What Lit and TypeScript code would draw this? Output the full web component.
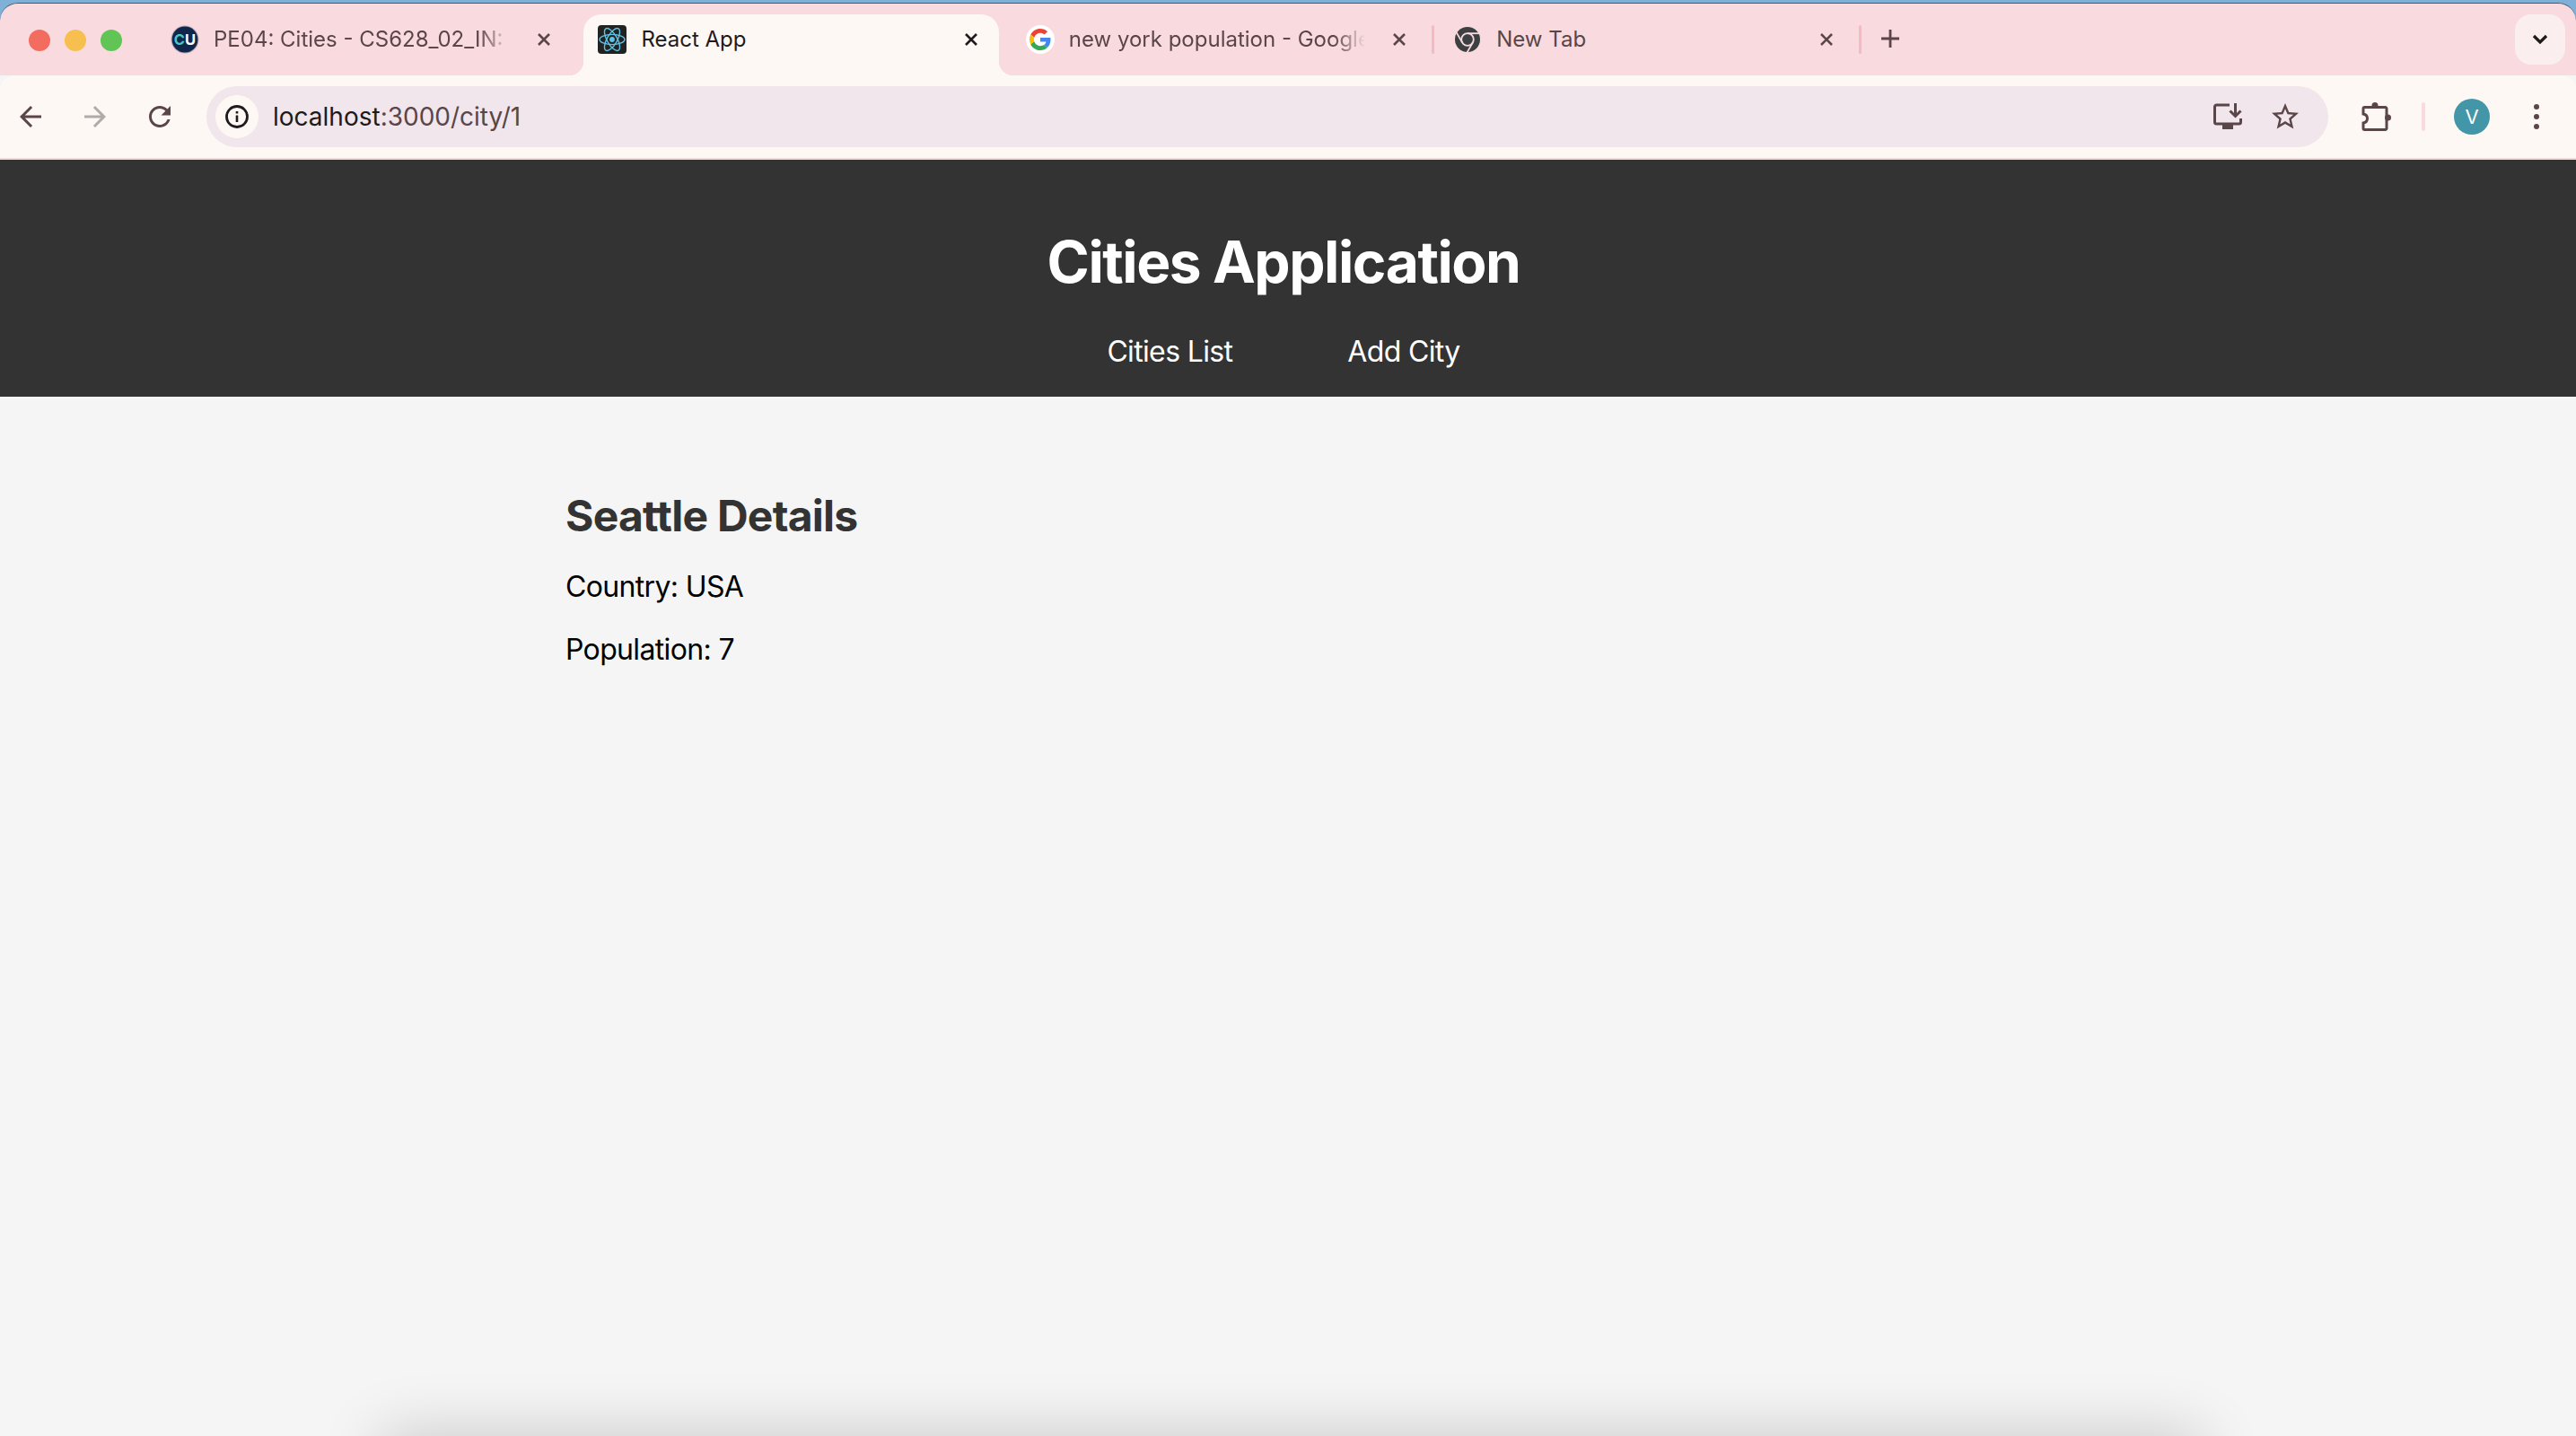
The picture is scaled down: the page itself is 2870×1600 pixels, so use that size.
import { LitElement, html, css } from "lit";
import { customElement } from "lit/decorators.js";

const cuIcon = html`<svg class="favicon" viewBox="0 0 32 32">
  <circle cx="16" cy="16" r="15.5" fill="#b9a9b4"></circle>
  <circle cx="16" cy="16" r="14.4" fill="#10264a"></circle>
  <text x="16" y="22" text-anchor="middle" font-family="Inter, sans-serif" font-weight="700" font-size="16.5" fill="#fff"><tspan fill="#4cc5c3">C</tspan>U</text>
</svg>`;

const reactIcon = html`<svg class="favicon" viewBox="0 0 32 32">
  <rect width="32" height="32" rx="4" fill="#222"></rect>
  <g fill="none" stroke="#5ec4e6" stroke-width="1.4">
    <ellipse cx="16" cy="16" rx="14" ry="5.6"></ellipse>
    <ellipse cx="16" cy="16" rx="14" ry="5.6" transform="rotate(60 16 16)"></ellipse>
    <ellipse cx="16" cy="16" rx="14" ry="5.6" transform="rotate(120 16 16)"></ellipse>
  </g>
  <circle cx="16" cy="16" r="2.9" fill="#5ec4e6"></circle>
</svg>`;

const googleIcon = html`<svg class="favicon" viewBox="0 0 32 32">
  <circle cx="16" cy="16" r="16" fill="#fff"></circle>
  <g transform="translate(4 4) scale(.5)">
    <path fill="#EA4335" d="M24 9.5c3.54 0 6.71 1.22 9.21 3.6l6.85-6.85C35.9 2.38 30.47 0 24 0 14.62 0 6.51 5.38 2.56 13.22l7.98 6.19C12.43 13.72 17.74 9.5 24 9.5z"></path>
    <path fill="#4285F4" d="M46.98 24.55c0-1.57-.15-3.09-.38-4.55H24v9.02h12.94c-.58 2.96-2.26 5.48-4.78 7.18l7.73 6c4.51-4.18 7.09-10.36 7.09-17.65z"></path>
    <path fill="#FBBC05" d="M10.53 28.59c-.48-1.45-.76-2.99-.76-4.59s.27-3.14.76-4.59l-7.98-6.19C.92 16.46 0 20.12 0 24c0 3.88.92 7.54 2.56 10.78l7.97-6.19z"></path>
    <path fill="#34A853" d="M24 48c6.48 0 11.93-2.13 15.89-5.81l-7.73-6c-2.15 1.45-4.92 2.3-8.16 2.3-6.26 0-11.57-4.22-13.47-9.91l-7.98 6.19C6.51 42.62 14.62 48 24 48z"></path>
  </g>
</svg>`;

const chromeIcon = html`<svg class="favicon" viewBox="0 0 32 32">
  <circle cx="16" cy="16" r="14" fill="#3c4043"></circle>
  <circle cx="16" cy="16" r="6.8" fill="none" stroke="#f9dbdf" stroke-width="1.8"></circle>
  <g stroke="#f9dbdf" stroke-width="1.8">
    <line x1="16" y1="9.2" x2="31" y2="9.2"></line>
    <line x1="16" y1="9.2" x2="31" y2="9.2" transform="rotate(120 16 16)"></line>
    <line x1="16" y1="9.2" x2="31" y2="9.2" transform="rotate(240 16 16)"></line>
  </g>
</svg>`;

const closeIcon = html`<svg class="close" viewBox="0 0 14 14"><path d="M1 1l12 12M13 1L1 13"></path></svg>`;

const tabs = [
  { title: "PE04: Cities - CS628_02_IN:", icon: cuIcon, fade: true, sep: false },
  { title: "React App", icon: reactIcon, active: true, fade: false, sep: false },
  { title: "new york population - Google", icon: googleIcon, fade: true, sep: true },
  { title: "New Tab", icon: chromeIcon, fade: false, sep: true },
];

const glyph = (d: string, cls = "") =>
  html`<svg class="glyph ${cls}" viewBox="0 0 24 24"><path d=${d}></path></svg>`;

@customElement("app-root")
export class AppRoot extends LitElement {
  static styles = css`
    :host {
      display: block;
      position: relative;
      height: 1600px;
      overflow: hidden;
      background: #f5f5f5;
      font-family: Inter, "Liberation Sans", sans-serif;
    }
    .titlebar {
      box-sizing: border-box;
      height: 84px;
      padding-top: 3px;
      background: #7fb0d8;
    }
    .strip {
      display: flex;
      box-sizing: border-box;
      height: 81px;
      background: #f9dbdf;
      border-top: 1px solid #46586a;
      border-radius: 20px 20px 0 0;
    }
    .lights {
      display: flex;
      gap: 16px;
      padding: 29px 0 0 32px;
    }
    .light {
      width: 24px;
      height: 24px;
      border-radius: 50%;
    }
    .tabs {
      display: flex;
      margin: 12px 0 0 38px;
    }
    .tab {
      display: flex;
      position: relative;
      box-sizing: border-box;
      width: 463px;
      height: 68px;
      padding: 12px 0 0 16px;
      font-size: 24px;
      line-height: 32px;
      color: #5a4548;
    }
    .tab.active {
      background: #fef8f5;
      border-radius: 20px 20px 0 0;
      color: #1f1a1c;
    }
    .tab.active::before,
    .tab.active::after {
      content: "";
      position: absolute;
      bottom: 0;
      width: 16px;
      height: 16px;
    }
    .tab.active::before {
      left: -16px;
      background: radial-gradient(circle at 0 0, transparent 16px, #fef8f5 16.5px);
    }
    .tab.active::after {
      right: -16px;
      background: radial-gradient(circle at 100% 0, transparent 16px, #fef8f5 16.5px);
    }
    .favicon {
      flex: none;
      width: 32px;
      height: 32px;
    }
    .title {
      flex: none;
      width: 332px;
      margin-left: 16px;
      white-space: nowrap;
    }
    .title.fade {
      -webkit-mask-image: linear-gradient(to right, #000 295px, transparent 330px);
      mask-image: linear-gradient(to right, #000 295px, transparent 330px);
    }
    .close {
      flex: none;
      width: 14px;
      height: 14px;
      margin: 9px 0 0 29px;
      fill: none;
      stroke: currentColor;
      stroke-width: 2.6;
    }
    .slot {
      display: flex;
      justify-content: center;
      width: 13.4px;
      padding-top: 12px;
    }
    .sep {
      width: 3px;
      height: 32px;
      border-radius: 2px;
      background: #f5b9c2;
    }
    .plus {
      width: 20px;
      height: 20px;
      margin: 29px 0 0 16px;
      stroke: #5a4548;
      stroke-width: 2.8;
      fill: none;
    }
    .more {
      display: flex;
      align-items: center;
      justify-content: center;
      width: 56px;
      height: 56px;
      margin: 12px 12px 0 auto;
      border-radius: 18px;
      background: #fbeeee;
    }
    .more svg {
      width: 18px;
      height: 12px;
      fill: none;
      stroke: #1f1a1c;
      stroke-width: 3.2;
    }
    .toolbar {
      display: flex;
      align-items: center;
      box-sizing: border-box;
      height: 94px;
      padding-left: 10px;
      background: #fef8f5;
      border-bottom: 2px solid #f0d9d8;
      border-radius: 16px 16px 0 0;
    }
    .btn {
      display: flex;
      flex: none;
      align-items: center;
      justify-content: center;
      width: 48px;
      height: 48px;
    }
    .nav-btns {
      display: flex;
      gap: 24px;
    }
    .glyph {
      width: 36px;
      height: 36px;
      fill: #5a4548;
    }
    .glyph.off {
      fill: #b2a9a9;
    }
    .omnibox {
      display: flex;
      flex: none;
      align-items: center;
      box-sizing: border-box;
      width: 2364px;
      height: 68px;
      margin-left: 28px;
      padding: 0 24px 0 10px;
      border-radius: 34px;
      background: #f0e6eb;
    }
    .chip {
      display: flex;
      align-items: center;
      justify-content: center;
      width: 48px;
      height: 48px;
      border-radius: 50%;
      background: #fef8f5;
    }
    .chip svg {
      width: 26px;
      height: 26px;
    }
    .url {
      flex: 1;
      margin-left: 16px;
      font-size: 28px;
      color: #5a4548;
    }
    .url b {
      font-weight: 400;
      color: #1f1a1c;
    }
    .omni-actions {
      display: flex;
      gap: 16px;
    }
    .install {
      width: 32px;
      height: 30px;
      fill: #5a4548;
    }
    .line {
      fill: none;
      stroke: #5a4548;
      stroke-width: 3;
    }
    .puzzle-btn {
      margin-left: 30px;
    }
    .puzzle {
      width: 34px;
      height: 32px;
    }
    .tool-sep {
      flex: none;
      width: 4px;
      height: 32px;
      margin-left: 26px;
      border-radius: 2px;
      background: #f9dbdf;
    }
    .avatar {
      display: flex;
      flex: none;
      align-items: center;
      justify-content: center;
      width: 40px;
      height: 40px;
      margin-left: 32px;
      border-radius: 50%;
      background: #4396a8;
      color: #fff;
      font-size: 22px;
    }
    .dots {
      display: flex;
      flex: none;
      flex-direction: column;
      align-items: center;
      gap: 5px;
      width: 48px;
      margin-left: 28px;
    }
    .dots i {
      width: 6px;
      height: 6px;
      border-radius: 50%;
      background: #5a4548;
    }
    header {
      display: flex;
      flex-direction: column;
      align-items: center;
      box-sizing: border-box;
      height: 264px;
      padding: 75px 10px 0 0;
      background: #333;
      color: #fff;
    }
    h1 {
      margin: 0;
      font-size: 64px;
      line-height: 78px;
      font-weight: 700;
      letter-spacing: -1.45px;
    }
    nav {
      display: flex;
      gap: 128px;
      margin-top: 41px;
      font-size: 32px;
      line-height: 39px;
      letter-spacing: -0.65px;
    }
    nav a {
      color: #fff;
      text-decoration: none;
    }
    main {
      width: 1610px;
      margin: 0 auto;
      padding-top: 104px;
    }
    h2 {
      margin: 0;
      font-size: 48px;
      line-height: 58px;
      font-weight: 700;
      color: #333;
      letter-spacing: -0.75px;
    }
    p {
      margin: 30px 0 0;
      font-size: 32px;
      line-height: 39px;
      color: #000;
      letter-spacing: -0.65px;
    }
    p + p {
      margin-top: 31px;
    }
    .dock-shadow {
      position: absolute;
      left: 425px;
      top: 1600px;
      width: 2027px;
      height: 60px;
      box-shadow: 0 0 70px rgba(0, 0, 0, 0.2);
    }
  `;

  render() {
    return html`
      <div class="titlebar">
        <div class="strip">
          <div class="lights">
            <span class="light" style="background:#f26d60"></span>
            <span class="light" style="background:#f6bf4f"></span>
            <span class="light" style="background:#60c554"></span>
          </div>
          <div class="tabs">
            ${tabs.map(
              (t) => html`
                <div class="tab ${t.active ? "active" : ""}">
                  ${t.icon}
                  <span class="title ${t.fade ? "fade" : ""}">${t.title}</span>
                  ${closeIcon}
                </div>
                <div class="slot">${t.sep ? html`<span class="sep"></span>` : ""}</div>
              `
            )}
          </div>
          <svg class="plus" viewBox="0 0 20 20"><path d="M10 0v20M0 10h20"></path></svg>
          <div class="more"><svg viewBox="0 0 18 12"><path d="M2 2l7 7 7-7"></path></svg></div>
        </div>
      </div>
      <div class="toolbar">
        <div class="nav-btns">
          <span class="btn">${glyph("M20 11H7.83l5.59-5.59L12 4l-8 8 8 8 1.41-1.41L7.83 13H20v-2z")}</span>
          <span class="btn">${glyph("M12 4l-1.41 1.41L16.17 11H4v2h12.17l-5.58 5.59L12 20l8-8z", "off")}</span>
          <span class="btn">${glyph("M17.65 6.35C16.2 4.9 14.21 4 12 4c-4.42 0-7.99 3.58-7.99 8s3.57 8 7.99 8c3.73 0 6.84-2.55 7.73-6h-2.08c-.82 2.33-3.04 4-5.65 4-3.31 0-6-2.69-6-6s2.69-6 6-6c1.66 0 3.14.69 4.22 1.78L13 11h7V4l-2.35 2.35z")}</span>
        </div>
        <div class="omnibox">
          <span class="chip">
            <svg viewBox="0 0 26 26">
              <circle cx="13" cy="13" r="11.5" fill="none" stroke="#1f1a1c" stroke-width="2.8"></circle>
              <path d="M11.7 11.5h2.6v7.5h-2.6zM11.7 7h2.6v2.6h-2.6z" fill="#1f1a1c"></path>
            </svg>
          </span>
          <span class="url"><b>localhost</b>:3000/city/1</span>
          <div class="omni-actions">
            <span class="btn">
              <svg class="install" viewBox="0 0 32 30">
                <path class="line" d="M18 2H3.5a2 2 0 0 0-2 2v17a2 2 0 0 0 2 2h25a2 2 0 0 0 2-2v-4"></path>
                <rect x="10" y="24" width="12" height="5"></rect>
                <path class="line" d="M24.5 0v14M18.5 8.5l6 6 6-6"></path>
              </svg>
            </span>
            <span class="btn">${glyph("M22 9.24l-7.19-.62L12 2 9.19 8.63 2 9.24l5.46 4.73L5.82 21 12 17.27 18.18 21l-1.63-7.03L22 9.24zM12 15.4l-3.76 2.27 1-4.28-3.32-2.88 4.38-.38L12 6.1l1.71 4.04 4.38.38-3.32 2.88 1 4.28L12 15.4z")}</span>
          </div>
        </div>
        <span class="btn puzzle-btn">
          <svg class="puzzle" viewBox="0 0 34 32">
            <path class="line" d="M3.5 5.5h23a1.5 1.5 0 0 1 1.5 1.5v22a1.5 1.5 0 0 1-1.5 1.5h-23a1.5 1.5 0 0 1-1.5-1.5v-6c3-.5 4.500-2.5 4.500-5s-1.500-4.500-4.500-5V7a1.500 1.500 0 0 1 1.500-1.500z"></path>
            <circle cx="15" cy="3.5" r="3.5" fill="#5a4548"></circle>
            <circle cx="29.5" cy="17" r="3.5" fill="#5a4548"></circle>
          </svg>
        </span>
        <span class="tool-sep"></span>
        <span class="avatar">V</span>
        <span class="dots"><i></i><i></i><i></i></span>
      </div>
      <header>
        <h1>Cities Application</h1>
        <nav><a href="#">Cities List</a><a href="#">Add City</a></nav>
      </header>
      <main>
        <h2>Seattle Details</h2>
        <p>Country: USA</p>
        <p>Population: 7</p>
      </main>
      <div class="dock-shadow"></div>
    `;
  }
}
